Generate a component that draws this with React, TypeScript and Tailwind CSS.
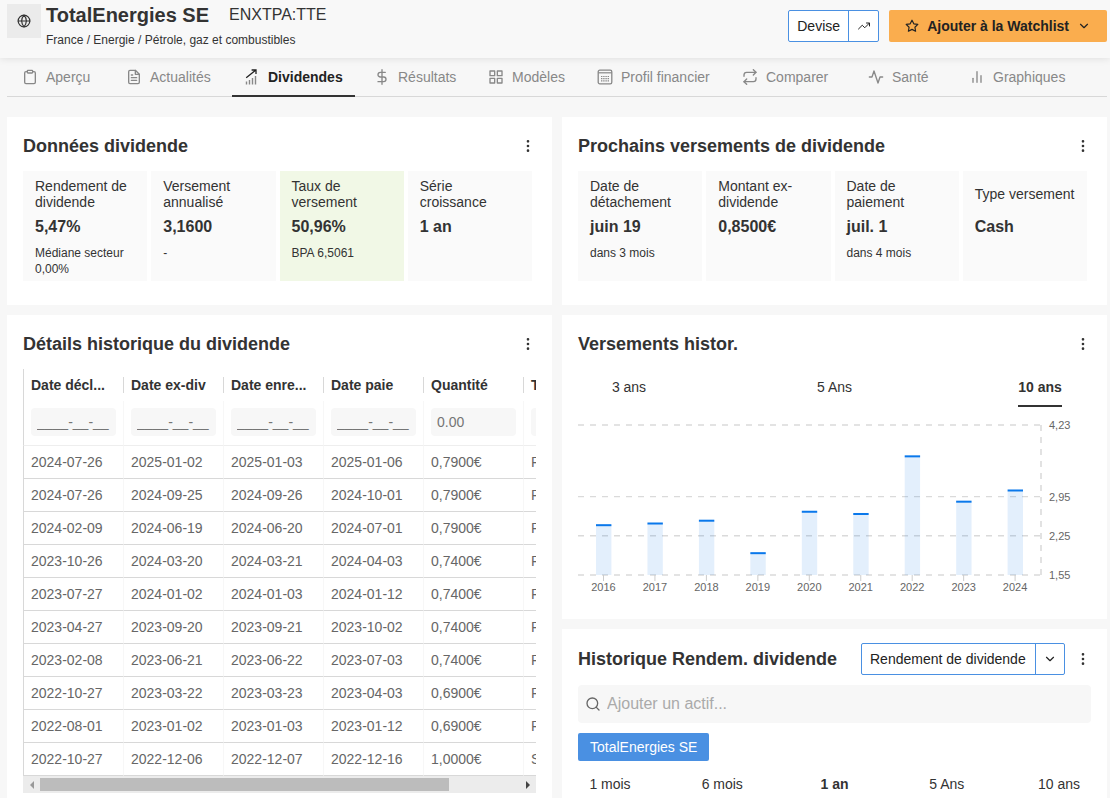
import type { ReactNode } from "react";
import {
  FiActivity,
  FiBarChart2,
  FiChevronDown,
  FiClipboard,
  FiDollarSign,
  FiFileText,
  FiGlobe,
  FiGrid,
  FiMoreVertical,
  FiRepeat,
  FiSearch,
  FiStar,
  FiTrendingUp,
} from "react-icons/fi";

const DividendIcon = () => (
  <svg width="16" height="16" viewBox="0 0 16 16" fill="none">
    <path
      d="M2.5 12.5V15.5M5.5 11V15.5M8.5 9V15.5M11.5 7V15.5"
      stroke="#888"
      strokeWidth="1.4"
    />
    <path
      d="M2.2 8.8 11.6 1.2M7.6 1h4.4v4"
      stroke="#222"
      strokeWidth="1.3"
    />
  </svg>
);

const ProfileIcon = () => (
  <svg width="16" height="16" viewBox="0 0 16 16" fill="none" stroke="currentColor">
    <rect x="1.2" y="1.2" width="13.6" height="13.6" rx="1.6" strokeWidth="1.3" />
    <path d="M1.2 3.8h13.6" strokeWidth="1.2" />
    <path d="M4 7.5h8M4 9.7h8M4 11.9h8" strokeWidth="1.2" strokeDasharray="1.4 0.8" />
  </svg>
);

const tabs = [
  { label: "Aperçu", icon: <FiClipboard size={16} /> },
  { label: "Actualités", icon: <FiFileText size={16} /> },
  { label: "Dividendes", icon: <DividendIcon />, active: true },
  { label: "Résultats", icon: <FiDollarSign size={16} /> },
  { label: "Modèles", icon: <FiGrid size={16} /> },
  { label: "Profil financier", icon: <ProfileIcon /> },
  { label: "Comparer", icon: <FiRepeat size={16} /> },
  { label: "Santé", icon: <FiActivity size={16} /> },
  { label: "Graphiques", icon: <FiBarChart2 size={16} /> },
];

type Stat = { label: string; value: string; note?: string; green?: boolean };

const dividendStats: Stat[] = [
  { label: "Rendement de dividende", value: "5,47%", note: "Médiane secteur 0,00%" },
  { label: "Versement annualisé", value: "3,1600", note: "-" },
  { label: "Taux de versement", value: "50,96%", note: "BPA 6,5061", green: true },
  { label: "Série croissance", value: "1 an" },
];

const nextStats: Stat[] = [
  { label: "Date de détachement", value: "juin 19", note: "dans 3 mois" },
  { label: "Montant ex-dividende", value: "0,8500€" },
  { label: "Date de paiement", value: "juil. 1", note: "dans 4 mois" },
  { label: "Type versement", value: "Cash" },
];

const columns = ["Date décl...", "Date ex-div", "Date enre...", "Date paie", "Quantité", "Type"];

const rows = [
  ["2024-07-26", "2025-01-02", "2025-01-03", "2025-01-06", "0,7900€", "Régulier"],
  ["2024-07-26", "2024-09-25", "2024-09-26", "2024-10-01", "0,7900€", "Régulier"],
  ["2024-02-09", "2024-06-19", "2024-06-20", "2024-07-01", "0,7900€", "Régulier"],
  ["2023-10-26", "2024-03-20", "2024-03-21", "2024-04-03", "0,7400€", "Régulier"],
  ["2023-07-27", "2024-01-02", "2024-01-03", "2024-01-12", "0,7400€", "Régulier"],
  ["2023-04-27", "2023-09-20", "2023-09-21", "2023-10-02", "0,7400€", "Régulier"],
  ["2023-02-08", "2023-06-21", "2023-06-22", "2023-07-03", "0,7400€", "Régulier"],
  ["2022-10-27", "2023-03-22", "2023-03-23", "2023-04-03", "0,6900€", "Régulier"],
  ["2022-08-01", "2023-01-02", "2023-01-03", "2023-01-12", "0,6900€", "Régulier"],
  ["2022-10-27", "2022-12-06", "2022-12-07", "2022-12-16", "1,0000€", "Spécial"],
];

const payouts = [
  { year: 2016, value: 2.44 },
  { year: 2017, value: 2.47 },
  { year: 2018, value: 2.52 },
  { year: 2019, value: 1.94 },
  { year: 2020, value: 2.68 },
  { year: 2021, value: 2.64 },
  { year: 2022, value: 3.67 },
  { year: 2023, value: 2.86 },
  { year: 2024, value: 3.06 },
];

const MIN = 1.55;
const MAX = 4.23;
const toY = (value: number) => 157 - ((value - MIN) / (MAX - MIN)) * 150;

const PayoutChart = () => (
  <svg viewBox="0 0 513 182" className="block w-full" role="img" aria-label="Versements par année">
    {[4.23, 2.95, 2.25, 1.55].map((tick) => (
      <g key={tick}>
        <line
          x1="0"
          x2="468"
          y1={toY(tick)}
          y2={toY(tick)}
          stroke="#dadada"
          strokeWidth="1.4"
          strokeDasharray="6 6"
        />
        <text x="471" y={toY(tick) + 4} fontSize="11" fill="#666">
          {tick.toFixed(2).replace(".", ",")}
        </text>
      </g>
    ))}
    <line x1="463" x2="463" y1="7" y2="157" stroke="#e2e2e2" strokeWidth="2" strokeDasharray="6 6" />
    {payouts.map(({ year, value }, i) => {
      const x = 25.5 + i * 51.45;
      const y = toY(value);
      return (
        <g key={year}>
          <rect x={x - 7.5} y={y} width="15.4" height={157 - y} fill="#0070e0" fillOpacity="0.11" />
          <rect x={x - 7.5} y={y - 1} width="15.4" height="2" fill="#0a78eb" />
          <line x1={x} x2={x} y1="157" y2="163" stroke="#ccc" />
          <text x={x} y="173" fontSize="11" fill="#666" textAnchor="middle">
            {year}
          </text>
        </g>
      );
    })}
  </svg>
);

const Menu = () => (
  <button aria-label="Options" className="text-[#333]">
    <FiMoreVertical size={16} />
  </button>
);

const Card = ({ title, className, children }: { title: string; className?: string; children: ReactNode }) => (
  <section className={`bg-white px-4 pt-4 ${className ?? ""}`}>
    <div className="flex items-center justify-between">
      <h2 className="text-[18px] leading-[26px] font-bold">{title}</h2>
      <Menu />
    </div>
    {children}
  </section>
);

const Stats = ({ items }: { items: Stat[] }) => (
  <div className="mt-3 mr-1 grid grid-cols-4 gap-1">
    {items.map((item) => (
      <div
        key={item.label}
        className={`min-h-[110px] pt-[7px] pr-2.5 pl-3 ${item.green ? "bg-[#f1f8e6]" : "bg-[#fafafa]"}`}
      >
        <div className="flex h-8 items-center text-sm leading-4">{item.label}</div>
        <div className="mt-[5px] text-base leading-6 font-bold">{item.value}</div>
        <div className="mt-1.5 text-xs leading-4">{item.note}</div>
      </div>
    ))}
  </div>
);

const HistoryTable = () => (
  <div className="mt-3">
    <div className="overflow-hidden">
      <table className="w-[600px] table-fixed border-separate border-spacing-0 text-left text-sm">
        <thead>
          <tr>
            {columns.map((name, i) => (
              <th key={name} className={`h-8 p-0 ${i === 0 ? "border-l border-[#d8d8d8]" : ""}`}>
                <div
                  className={`h-4 pl-[7px] leading-4 whitespace-nowrap ${i === 0 ? "" : "border-l border-[#d8d8d8]"}`}
                >
                  {name}
                </div>
              </th>
            ))}
          </tr>
          <tr>
            {columns.map((name, i) => (
              <td
                key={name}
                className={`h-[45px] border-b border-l border-b-[#eee] px-[7px] pt-[7px] pb-0 align-top ${
                  i === 0 ? "border-l-[#d8d8d8]" : "border-l-[#f7f7f7]"
                }`}
              >
                <input
                  aria-label={name}
                  placeholder={i < 4 ? "____-__-__" : i === 4 ? "0.00" : ""}
                  className="block h-7 w-full rounded-sm bg-[#f7f7f7] px-1.5 placeholder:text-[#757575]"
                />
              </td>
            ))}
          </tr>
        </thead>
        <tbody>
          {rows.map((row) => (
            <tr key={row[1]}>
              {row.map((cell, i) => (
                <td
                  key={i}
                  className={`h-[33px] border-b border-l border-b-[#d8d8d8] p-0 pl-[7px] text-[#666] ${
                    i === 0 ? "border-l-[#d8d8d8]" : "border-l-[#f7f7f7]"
                  }`}
                >
                  {cell}
                </td>
              ))}
            </tr>
          ))}
        </tbody>
      </table>
    </div>
    <div className="flex h-[17px] items-center bg-[#ececec]">
      <button aria-label="Défiler à gauche" className="flex w-[17px] justify-center">
        <svg width="4" height="8" viewBox="0 0 4 8" fill="#999">
          <path d="M4 0v8L0 4z" />
        </svg>
      </button>
      <div className="flex-1">
        <div className="h-[13px] w-[85.4%] bg-[#bcbcbc]"></div>
      </div>
      <button aria-label="Défiler à droite" className="flex w-[17px] justify-center">
        <svg width="4" height="8" viewBox="0 0 4 8" fill="#444">
          <path d="M0 0v8l4-4z" />
        </svg>
      </button>
    </div>
  </div>
);

export default function App() {
  return (
    <div className="min-h-screen bg-[#f7f7f7] font-['Liberation_Sans',Arial,sans-serif] text-[#333]">
      <header className="relative flex h-[58px] justify-between bg-[#f8f8f8] pr-[3px] pl-[7px] shadow-[0_0_8px_rgba(0,0,0,0.12)]">
        <div className="flex gap-[5px] pt-1">
          <div className="flex h-[34px] w-[34px] items-center justify-center bg-[#ebebeb]">
            <FiGlobe size={14} />
          </div>
          <div>
            <div className="flex items-center gap-5">
              <h1 className="text-xl leading-[22px] font-bold">TotalEnergies SE</h1>
              <span className="text-base leading-[22px]">ENXTPA:TTE</span>
            </div>
            <div className="mt-0.5 text-xs leading-6">France / Energie / Pétrole, gaz et combustibles</div>
          </div>
        </div>
        <div className="box-content flex h-8 gap-2.5 self-start pt-2.5">
          <div className="flex rounded-xs border border-[#4a90e2] bg-white text-sm text-[#222]">
            <button className="w-[59px]">Devise</button>
            <button
              aria-label="Tendance"
              className="flex w-[30px] items-center justify-center border-l border-[#4a90e2]"
            >
              <FiTrendingUp size={12} />
            </button>
          </div>
          <button className="flex items-center rounded-xs bg-[#faad4e] px-4 text-sm font-bold text-[#222]">
            <FiStar size={14} />
            <span className="ml-2">Ajouter à la Watchlist</span>
            <FiChevronDown size={14} className="ml-2" />
          </button>
        </div>
      </header>

      <nav className="mr-[3px] ml-[7px] grid h-[39px] grid-cols-[104fr_118fr_130fr_114fr_109fr_145fr_126fr_101fr_150fr] border-b border-[#d8d8d8] pl-[3px]">
        {tabs.map((tab) => (
          <a
            key={tab.label}
            href="#"
            className={`flex h-[39px] items-center gap-2 justify-self-start border-b-2 px-3 text-sm whitespace-nowrap ${
              tab.active ? "border-[#333] font-bold text-[#222]" : "border-transparent text-[#888]"
            }`}
          >
            {tab.icon}
            {tab.label}
          </a>
        ))}
      </nav>

      <main className="mt-5 mr-[3px] ml-[7px] grid grid-cols-2 gap-2.5">
        <div className="flex min-w-0 flex-col gap-2.5">
          <Card title="Données dividende" className="pb-6">
            <Stats items={dividendStats} />
          </Card>
          <Card title="Détails historique du dividende" className="flex-1">
            <HistoryTable />
          </Card>
        </div>

        <div className="flex min-w-0 flex-col gap-2.5">
          <Card title="Prochains versements de dividende" className="pb-6">
            <Stats items={nextStats} />
          </Card>

          <Card title="Versements histor." className="pb-[19px]">
            <div className="mt-2.5 mb-[11px] flex justify-between text-sm">
              {["3 ans", "5 Ans", "10 ans"].map((range) => (
                <button key={range} className="flex w-[102px] justify-center">
                  <span
                    className={`h-10 border-b-2 leading-10 ${
                      range === "10 ans" ? "border-[#333] font-bold" : "border-transparent"
                    }`}
                  >
                    {range}
                  </span>
                </button>
              ))}
            </div>
            <PayoutChart />
          </Card>

          <section className="flex-1 bg-white px-4 pt-3.5 pb-px">
            <div className="flex items-center">
              <h2 className="flex-1 text-[18px] leading-8 font-bold">Historique Rendem. dividende</h2>
              <div className="mr-2.5 flex h-8 rounded-xs border border-[#4a90e2] text-sm text-[#222]">
                <select aria-label="Indicateur" className="w-[173px] appearance-none px-2">
                  <option>Rendement de dividende</option>
                </select>
                <button
                  aria-label="Ouvrir la liste"
                  className="flex w-[29px] items-center justify-center border-l border-[#4a90e2]"
                >
                  <FiChevronDown size={14} />
                </button>
              </div>
              <Menu />
            </div>
            <label className="mt-2.5 flex h-[38px] items-center gap-1.5 rounded-sm bg-[#f7f7f7] pr-2 pl-[7px]">
              <FiSearch size={16} className="text-[#666]" />
              <input
                aria-label="Ajouter un actif"
                placeholder="Ajouter un actif..."
                className="flex-1 text-base placeholder:text-[#aaa]"
              />
            </label>
            <button className="mt-2.5 h-7 rounded-xs bg-[#4a90e2] px-3 text-sm text-white">
              TotalEnergies SE
            </button>
            <div className="mt-2.5 flex justify-between text-sm">
              {["1 mois", "6 mois", "1 an", "5 Ans", "10 ans"].map((range) => (
                <button key={range} className={`w-16 leading-[26px] ${range === "1 an" ? "font-bold" : ""}`}>
                  {range}
                </button>
              ))}
            </div>
          </section>
        </div>
      </main>
    </div>
  );
}
